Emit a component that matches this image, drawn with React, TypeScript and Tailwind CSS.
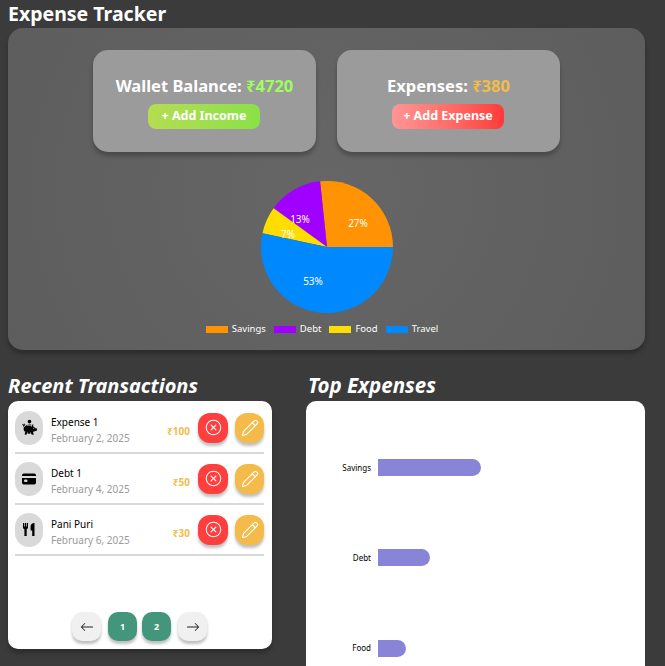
import { BsArrowLeft, BsArrowRight } from "react-icons/bs"
import { GiPiggyBank } from "react-icons/gi"
import { IoIosCloseCircleOutline } from "react-icons/io"
import { IoCard } from "react-icons/io5"
import { Pencil } from "lucide-react"

const font = "font-['Noto_Sans',sans-serif]"

// label offsets are from the pie centre
const pieData = [
  { name: "Savings", value: 100, color: "#ff9304", label: "27%", dx: 31, dy: -24 },
  { name: "Debt", value: 50, color: "#a000ff", label: "13%", dx: -27, dy: -28 },
  { name: "Food", value: 25, color: "#ffdd00", label: "7%", dx: -39, dy: -13 },
  { name: "Travel", value: 200, color: "#0088fe", label: "53%", dx: -14, dy: 34 },
]

function ForkKnife() {
  return (
    <svg width="12" height="13" viewBox="0 0 12 13" fill="currentColor">
      <path d="M0 0h1.2v3.6h.7V0h1.2v3.6h.7V0H5v4.6c0 .9-.6 1.4-1.3 1.6V13H1.4V6.2C.6 6 0 5.500 0 4.600Z" />
      <path d="M11.500 0v13H9.200V7.600H7.600V3.400C7.600 1.400 9.200 0 11.500 0Z" />
    </svg>
  )
}

const transactions = [
  { title: "Expense 1", date: "February 2, 2025", amount: "₹100", icon: <GiPiggyBank size={17} /> },
  { title: "Debt 1", date: "February 4, 2025", amount: "₹50", icon: <IoCard size={16} /> },
  { title: "Pani Puri", date: "February 6, 2025", amount: "₹30", icon: <ForkKnife /> },
]

const bars = [
  { name: "Savings", width: 103 },
  { name: "Debt", width: 52 },
  { name: "Food", width: 28 },
]

function Pie() {
  const cx = 70
  const cy = 70
  const r = 66
  const total = pieData.reduce((sum, d) => sum + d.value, 0)
  let angle = 0
  const slices = pieData.map((d) => {
    const sweep = (d.value / total) * 360
    const a0 = (angle * Math.PI) / 180
    const a1 = ((angle + sweep) * Math.PI) / 180
    angle += sweep
    return {
      ...d,
      path: `M${cx} ${cy}L${cx + r * Math.cos(a0)} ${cy - r * Math.sin(a0)}A${r} ${r} 0 ${sweep > 180 ? 1 : 0} 0 ${cx + r * Math.cos(a1)} ${cy - r * Math.sin(a1)}Z`,
    }
  })
  return (
    <svg width="140" height="140" viewBox="0 0 140 140">
      {slices.map((s) => (
        <path key={s.name} d={s.path} fill={s.color} />
      ))}
      {slices.map((s) => (
        <text key={s.name} x={cx + s.dx} y={cy + s.dy} fill="#fff" fontSize="10" textAnchor="middle" dominantBaseline="central">
          {s.label}
        </text>
      ))}
    </svg>
  )
}

function Transaction({ t }: { t: (typeof transactions)[number] }) {
  return (
    <div className="flex items-center h-[51px] border-b-2 border-[#d9d9d9]">
      <div className="w-[28px] h-[34px] rounded-full bg-[#d9d9d9] flex items-center justify-center text-black">
        {t.icon}
      </div>
      <div className="ml-[8px] mt-[5px] flex flex-col gap-[2px]">
        <p className="text-[10px] leading-[14px] text-black">{t.title}</p>
        <p className="text-[10px] leading-[14px] text-[#9b9b9b]">{t.date}</p>
      </div>
      <span className="ml-auto mr-[8px] mt-[7px] text-[10px] font-bold text-[#f4bb4a]">{t.amount}</span>
      <button className="w-[30px] h-[30px] rounded-[12px] bg-[#ff3e3e] flex items-center justify-center text-white shadow-[0_3px_3px_rgba(0,0,0,0.25)]">
        <IoIosCloseCircleOutline size={19} />
      </button>
      <button className="ml-[7px] w-[29px] h-[30px] rounded-[12px] bg-[#f4bb4a] flex items-center justify-center text-white shadow-[0_3px_3px_rgba(0,0,0,0.25)]">
        <Pencil size={18} strokeWidth={1.5} />
      </button>
    </div>
  )
}

export default function App() {
  return (
    <div className={`${font} h-[666px] overflow-hidden bg-[#3b3b3b] text-white px-[8px]`}>
      <h1 className="text-[19.5px] font-bold leading-[28px] h-[28px]">Expense Tracker</h1>

      <section className="w-[637px] h-[322px] rounded-[15px] bg-[radial-gradient(circle,#666666,#5d5d5d)] shadow-[0_4px_4px_rgba(0,0,0,0.25)] flex flex-col items-center pt-[22px]">
        <div className="flex gap-[21px]">
          <div className="w-[223px] h-[102px] rounded-[15px] bg-[#9b9b9b] shadow-[0_4px_4px_rgba(0,0,0,0.25)] flex flex-col items-center pt-[25px]">
            <p className="text-[16.5px] font-bold leading-[22px]">
              Wallet Balance: <span className="text-[#9dff5b]">₹4720</span>
            </p>
            <button className="mt-[7px] mr-[1px] w-[112px] h-[25px] rounded-[8px] bg-gradient-to-r from-[#b5dc52] to-[#89e148] text-[12.5px] font-bold">
              + Add Income
            </button>
          </div>
          <div className="w-[223px] h-[102px] rounded-[15px] bg-[#9b9b9b] shadow-[0_4px_4px_rgba(0,0,0,0.25)] flex flex-col items-center pt-[25px]">
            <p className="text-[16.5px] font-bold leading-[22px]">
              Expenses: <span className="text-[#f4bb4a]">₹380</span>
            </p>
            <button className="mt-[7px] mr-[1px] w-[112px] h-[25px] rounded-[8px] bg-gradient-to-r from-[#ff9595] to-[#ff3838] text-[12.5px] font-bold">
              + Add Expense
            </button>
          </div>
        </div>

        <div className="mt-[25px]">
          <Pie />
        </div>

        <div className="mt-[5px] mr-[9px] flex items-center gap-[8px] text-[9.5px] leading-[14px]">
          {pieData.map((d) => (
            <div key={d.name} className="flex items-center gap-[4px]">
              <span className="w-[22px] h-[7px]" style={{ backgroundColor: d.color }} />
              {d.name}
            </div>
          ))}
        </div>
      </section>

      <div className="mt-[22px] flex gap-[34px]">
        <div className="w-[264px]">
          <h2 className="text-[20px] font-bold italic leading-[27px] mb-[2px]">Recent Transactions</h2>
          <div className="h-[248px] rounded-[10px] bg-white shadow-[0_4px_4px_rgba(0,0,0,0.25)] pl-[7px] pr-[8px] pt-[2px] flex flex-col">
            {transactions.map((t) => (
              <Transaction key={t.title} t={t} />
            ))}
            <div className="mt-auto mb-[8px] flex items-center justify-center">
              <button className="w-[29px] h-[29px] rounded-[10px] bg-[#f0f0f0] flex items-center justify-center text-[#222] shadow-[0_3px_3px_rgba(0,0,0,0.25)]">
                <BsArrowLeft size={14} />
              </button>
              <button className="ml-[7px] w-[29px] h-[29px] rounded-[10px] bg-[#43967b] text-[9px] font-bold shadow-[0_3px_3px_rgba(0,0,0,0.25)]">
                1
              </button>
              <button className="ml-[5px] w-[29px] h-[29px] rounded-[10px] bg-[#43967b] text-[9px] font-bold shadow-[0_3px_3px_rgba(0,0,0,0.25)]">
                2
              </button>
              <button className="ml-[7px] w-[29px] h-[29px] rounded-[10px] bg-[#f0f0f0] flex items-center justify-center text-[#222] shadow-[0_3px_3px_rgba(0,0,0,0.25)]">
                <BsArrowRight size={14} />
              </button>
            </div>
          </div>
        </div>

        <div className="w-[339px]">
          <h2 className="text-[20.5px] font-bold italic leading-[27px] mb-[2px] pl-[2px]">Top Expenses</h2>
          <div className="h-[300px] rounded-[10px] bg-white pt-[58px] flex flex-col gap-[73.3px]">
            {bars.map((b) => (
              <div key={b.name} className="flex items-center h-[17px]">
                <span className="w-[65px] text-right text-[8px] text-black">{b.name}</span>
                <span className="ml-[7px] h-[17px] rounded-r-[9px] bg-[#8884d8]" style={{ width: b.width }} />
              </div>
            ))}
          </div>
        </div>
      </div>
    </div>
  )
}
